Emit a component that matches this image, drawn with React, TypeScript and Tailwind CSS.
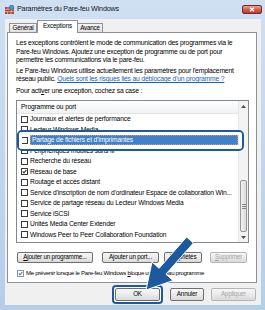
import React from "react";

function Box({ checked, light }: { checked?: boolean; light?: boolean }) {
  return (
    <span
      className={`relative inline-block w-[7px] h-[7px] shrink-0 border bg-white ${
        light ? "border-[#8e98a6]" : "border-[#3a3a3a]"
      }`}
    >
      {checked && (
        <svg viewBox="0 0 5 5" className="absolute inset-0 w-full h-full">
          <path
            d="M0.7 2.4 L2 3.8 L4.4 0.9"
            stroke={light ? "#6b7f9e" : "#2a4a2a"}
            strokeWidth="1.1"
            fill="none"
          />
        </svg>
      )}
    </span>
  );
}

function Btn({
  children,
  w,
  disabled,
}: {
  children: React.ReactNode;
  w: string;
  disabled?: boolean;
}) {
  return (
    <div
      className={`${w} h-[11px] rounded-[2px] border flex items-center justify-center text-[6.3px] tracking-[-0.2px] bg-gradient-to-b from-[#f7f7f7] via-[#ebebeb] to-[#d9d9d9] ${
        disabled ? "border-[#b3b6b9] text-[#a5a5a5]" : "border-[#6f6f6f] text-black"
      }`}
    >
      {children}
    </div>
  );
}

function Row({ label, checked }: { label: string; checked?: boolean }) {
  return (
    <div className="h-[10.5px] flex items-center pl-[4px]">
      <Box checked={checked} />
      <span className="ml-[2px] whitespace-nowrap">{label}</span>
    </div>
  );
}

export default function App() {
  const rowsTop = [
    { label: "Journaux et alertes de performance" },
    { label: "Lecteur Windows Media" },
  ];
  const rowsBottom = [
    { label: "Périphériques mobiles sans fil" },
    { label: "Recherche du réseau" },
    { label: "Réseau de base", checked: true },
    { label: "Routage et accès distant" },
    { label: "Service d'inscription de nom d'ordinateur Espace de collaboration Win..." },
    { label: "Service de partage réseau du Lecteur Windows Media" },
    { label: "Service iSCSI" },
    { label: "Unités Media Center Extender" },
    { label: "Windows Peer to Peer Collaboration Foundation" },
  ];

  return (
    <div className="relative w-[265px] h-[310px] overflow-hidden bg-gradient-to-b from-[#cfe0f3] to-[#b4cde9] font-['Liberation_Sans',Arial,sans-serif] text-[6.8px] leading-[8.5px] tracking-[-0.2px] text-black">
      {/* Title bar */}
      <div className="h-[19px] flex items-center pl-[5px] pr-[3px]">
        <svg viewBox="0 0 9 9" className="w-[9px] h-[9px] shrink-0">
          <rect x="0" y="2" width="9" height="7" fill="#b0483a" />
          <path d="M0 4.3h9M0 6.6h9M3 2v2.3M6.5 4.3v2.3M2.5 6.6V9M6 6.6V9" stroke="#e9d3c8" strokeWidth="0.6" />
          <circle cx="6.6" cy="2.4" r="2.3" fill="#3e87d6" stroke="#1f4f90" strokeWidth="0.4" />
          <path d="M5.3 1.6c.7.4 1.3 0 2.3.6M5.5 3.2c.5-.3 1.5.2 2.2-.2" stroke="#7bc263" strokeWidth="0.6" fill="none" />
        </svg>
        <span className="ml-[3px] text-[7.2px] tracking-[-0.2px] text-[#101820] whitespace-nowrap">
          Paramètres du Pare-feu Windows
        </span>
        <div className="ml-auto mb-[1px] w-[20px] h-[9px] rounded-[2px] border border-[#6c2f28] bg-gradient-to-b from-[#e9a595] via-[#d25e4e] to-[#b93a2c] flex items-center justify-center">
          <svg viewBox="0 0 6 5" className="w-[6px] h-[5px]">
            <path d="M1 0.7 L5 4.3 M5 0.7 L1 4.3" stroke="#ffffff" strokeWidth="1.2" />
          </svg>
        </div>
      </div>

      {/* Client area */}
      <div className="ml-[5px] w-[256px] h-[286px] bg-[#f0f0f0] flex flex-col">
        {/* Tabs */}
        <div className="h-[13px] flex items-end pl-[4px] text-[6.3px]">
          <div className="w-[28px] h-[9px] border border-b-0 border-[#8d929a] bg-gradient-to-b from-[#f5f5f5] to-[#e0e0e0] flex items-center justify-center">
            Général
          </div>
          <div className="relative z-10 w-[41px] h-[13px] -mb-px border border-b-0 border-[#8d929a] bg-white flex items-center justify-center pb-[2px]">
            Exceptions
          </div>
          <div className="w-[25px] h-[9px] border border-b-0 border-l-0 border-[#8d929a] bg-gradient-to-b from-[#f5f5f5] to-[#e0e0e0] flex items-center justify-center">
            Avancé
          </div>
        </div>

        {/* Panel */}
        <div className="ml-[2px] w-[250px] h-[251px] border border-[#8d929a] bg-white px-[8px] pt-[6px]">
          <p className="whitespace-nowrap">
            Les exceptions contrôlent le mode de communication des programmes via le
            <br />
            Pare-feu Windows. Ajoutez une exception de programme ou de port pour
            <br />
            permettre les communications via le pare-feu.
          </p>
          <p className="mt-[2px] whitespace-nowrap">
            Le Pare-feu Windows utilise actuellement les paramètres pour l'emplacement
            <br />
            réseau public.{" "}
            <span className="text-[#1a62c4] underline">
              Quels sont les risques liés au déblocage d'un programme ?
            </span>
          </p>
          <p className="mt-[3.5px] whitespace-nowrap">
            Pour acti<span className="underline">v</span>er une exception, cochez sa case :
          </p>

          {/* List */}
          <div className="relative mt-[4.5px] w-[233px] h-[143px] border border-[#828790] flex text-[6.7px] tracking-[-0.15px]">
            <div className="flex-1 flex flex-col overflow-hidden">
              <div className="h-[13px] flex items-center pl-[4px] border-b border-[#e3e3e3] bg-gradient-to-b from-[#ffffff] to-[#f1f2f4]">
                Programme ou port
              </div>
              {rowsTop.map((r) => (
                <Row key={r.label} label={r.label} />
              ))}
              <div className="h-[10.5px] flex items-center pl-[4px]">
                <Box />
                <span className="ml-[2px] flex-1 h-[10px] flex items-center pl-[1px] bg-[#3f82c9] text-white whitespace-nowrap border border-dotted border-[#e09a6a]">
                  Partage de fichiers et d'imprimantes
                </span>
              </div>
              {rowsBottom.map((r) => (
                <Row key={r.label} label={r.label} checked={r.checked} />
              ))}
            </div>
            {/* Scrollbar */}
            <div className="w-[10px] shrink-0 flex flex-col bg-[#f3f3f3] border-l border-[#e6e6e6]">
              <div className="h-[10px] flex items-center justify-center">
                <svg viewBox="0 0 5 3" className="w-[5px] h-[3px]">
                  <path d="M0 3 L2.5 0 L5 3 Z" fill="#4d4d4d" />
                </svg>
              </div>
              <div className="flex-1" />
              <div className="h-[52px] mx-[1px] rounded-[2px] border border-[#979797] bg-gradient-to-r from-[#f2f2f2] to-[#dadada] flex flex-col items-center justify-center gap-[1px]">
                <div className="w-[4px] h-px bg-[#8a8a8a]" />
                <div className="w-[4px] h-px bg-[#8a8a8a]" />
                <div className="w-[4px] h-px bg-[#8a8a8a]" />
              </div>
              <div className="h-[10px] flex items-center justify-center">
                <svg viewBox="0 0 5 3" className="w-[5px] h-[3px]">
                  <path d="M0 0 L2.5 3 L5 0 Z" fill="#4d4d4d" />
                </svg>
              </div>
            </div>

            {/* Highlight callout */}
            <div className="absolute left-0 top-[29px] w-[227px] h-[21px] rounded-[5px] border-2 border-[#1d5a9c]">
              <div className="w-full h-full rounded-[3px] border-[3px] border-white" />
            </div>
          </div>

          {/* Buttons */}
          <div className="mt-[9px] flex items-center">
            <div className="ml-px">
              <Btn w="w-[76px]">
                <span>
                  <span className="underline">A</span>jouter un programme...
                </span>
              </Btn>
            </div>
            <div className="ml-[9px]">
              <Btn w="w-[57px]">Ajouter un port...</Btn>
            </div>
            <div className="ml-[5px]">
              <Btn w="w-[38px]">Propriétés</Btn>
            </div>
            <div className="ml-[8px]">
              <Btn w="w-[37px]" disabled>
                <span>
                  <span className="underline">S</span>upprimer
                </span>
              </Btn>
            </div>
          </div>

          <div className="mt-[6px] flex items-center pl-[1px] text-[6.1px] tracking-[-0.3px]">
            <Box checked light />
            <span className="ml-[2px] whitespace-nowrap">
              Me prévenir lorsque le Pare-feu Windows <span className="underline">b</span>loque un
              nouveau programme
            </span>
          </div>
        </div>

        {/* Bottom buttons */}
        <div className="mt-[2px] flex items-center justify-end pr-[5px]">
          <div className="rounded-[4px] border-2 border-[#1d5a9c] bg-white p-px">
            <Btn w="w-[45px] !h-[13px]">OK</Btn>
          </div>
          <div className="ml-[7px]">
            <Btn w="w-[34px] !h-[13px]">Annuler</Btn>
          </div>
          <div className="ml-[7px]">
            <Btn w="w-[45px] !h-[13px]" disabled>
              Appliquer
            </Btn>
          </div>
        </div>
      </div>

      {/* Annotation arrow */}
      <svg
        className="absolute inset-0 w-[265px] h-[310px] pointer-events-none"
        viewBox="0 0 265 310"
      >
        <polygon
          points="186.6,237 193.4,243 165.9,274.2 173,280.5 146,290 152,262 159.1,268.3"
          fill="#1c5aa0"
          stroke="#ffffff"
          strokeWidth="1"
          strokeLinejoin="round"
        />
      </svg>
    </div>
  );
}
